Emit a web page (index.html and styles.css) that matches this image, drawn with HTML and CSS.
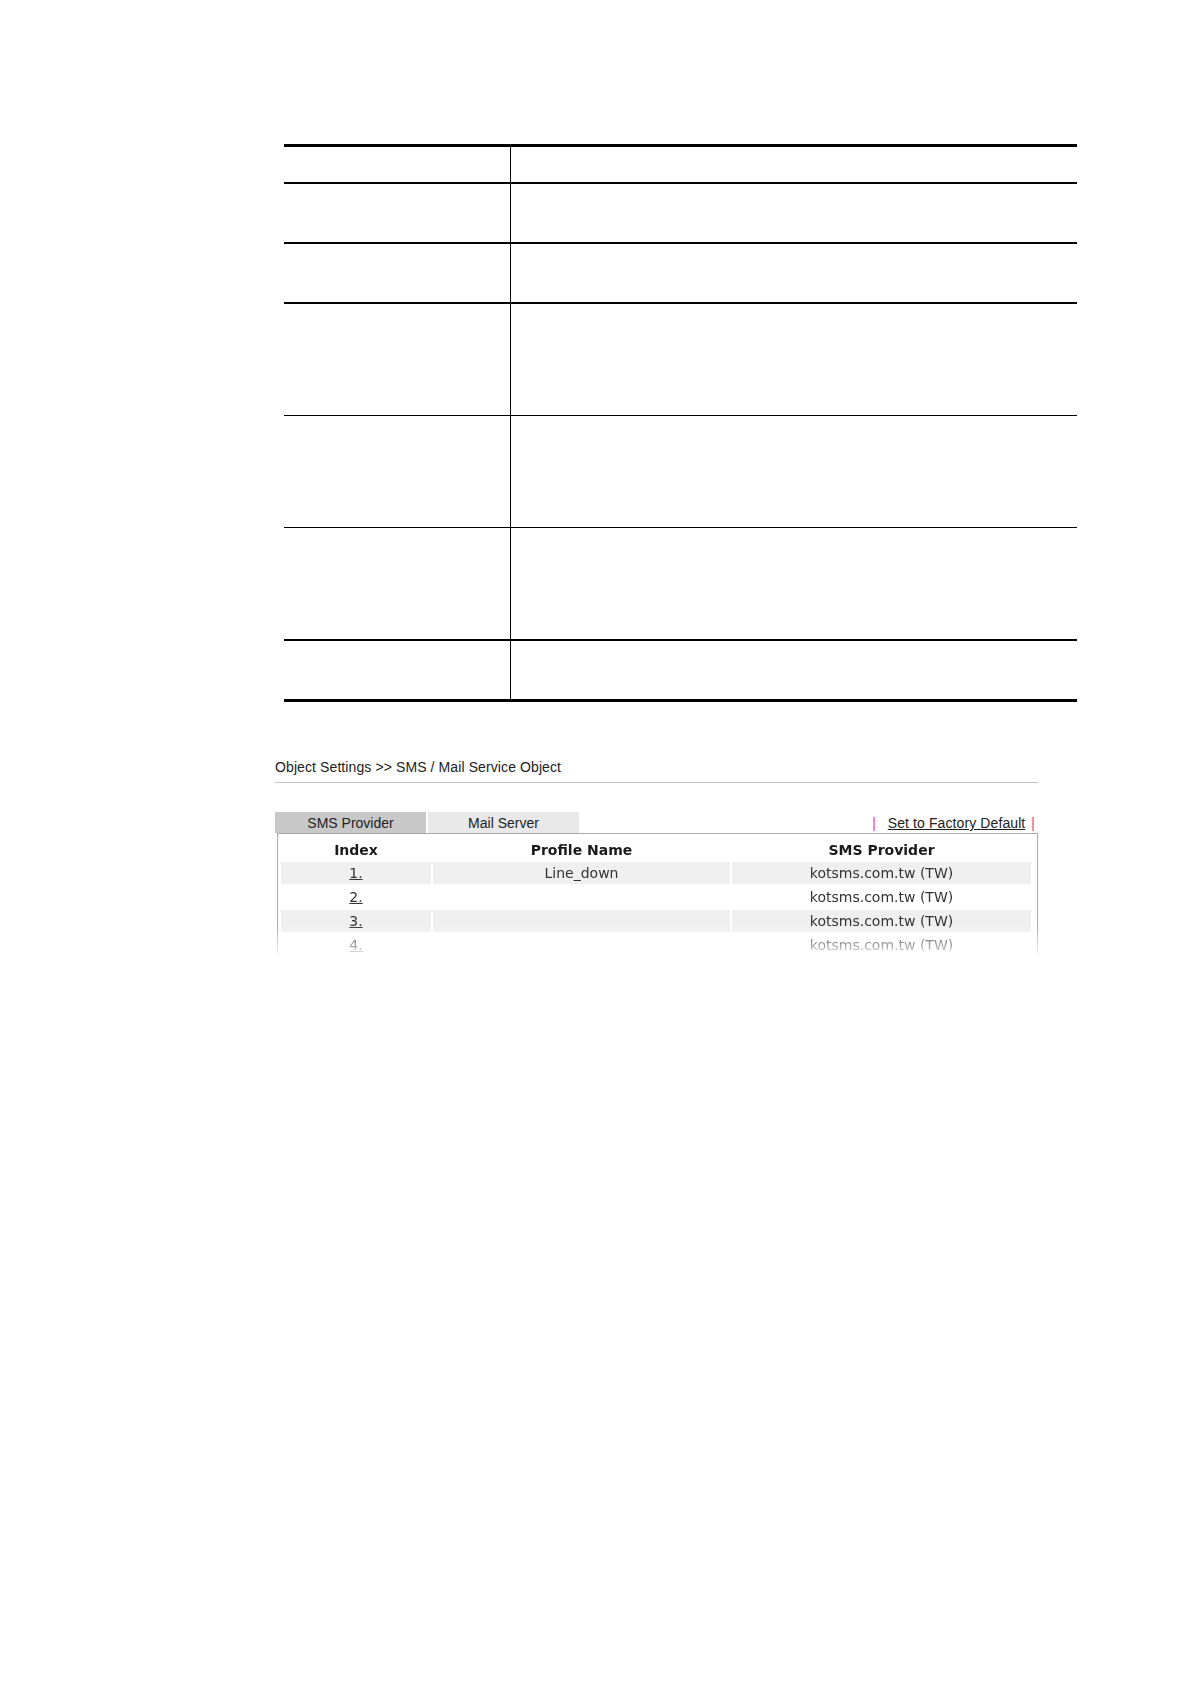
FILE: index.html
```html
<!DOCTYPE html>
<html>
<head>
<meta charset="utf-8">
<title>SMS / Mail Service Object</title>
<link rel="stylesheet" href="styles.css">
</head>
<body>
<div class="page">
  <div class="spec">
    <div class="row r1"><div class="k"></div><div class="v"></div></div>
    <div class="row r2"><div class="k"></div><div class="v"></div></div>
    <div class="row r3"><div class="k"></div><div class="v"></div></div>
    <div class="row r4"><div class="k"></div><div class="v"></div></div>
    <div class="row r5"><div class="k"></div><div class="v"></div></div>
    <div class="row r6"><div class="k"></div><div class="v"></div></div>
    <div class="row r7"><div class="k"></div><div class="v"></div></div>
  </div>

  <div class="shot">
    <div class="crumb">Object Settings &gt;&gt; SMS / Mail Service Object</div>
    <div class="tabbar">
      <div class="tab active">SMS Provider</div>
      <div class="tab">Mail Server</div>
      <div class="actions"><span class="bar bar-l">|</span><a class="link" href="#">Set to Factory Default</a><span class="bar bar-r">|</span></div>
    </div>
    <div class="panel">
      <table class="grid">
        <colgroup><col class="c1"><col class="c2"><col class="c3"></colgroup>
        <thead>
          <tr><th>Index</th><th>Profile Name</th><th>SMS Provider</th></tr>
        </thead>
        <tbody>
          <tr class="odd"><td><a class="idx" href="#">1.</a></td><td>Line_down</td><td>kotsms.com.tw (TW)</td></tr>
          <tr><td><a class="idx" href="#">2.</a></td><td></td><td>kotsms.com.tw (TW)</td></tr>
          <tr class="odd"><td><a class="idx" href="#">3.</a></td><td></td><td>kotsms.com.tw (TW)</td></tr>
          <tr><td><a class="idx" href="#">4.</a></td><td></td><td>kotsms.com.tw (TW)</td></tr>
        </tbody>
      </table>
    </div>
  </div>
</div>
</body>
</html>
```

FILE: styles.css
```css
html, body {
  margin: 0;
  padding: 0;
  background: #ffffff;
}

.page {
  padding-top: 144px;
  min-height: 1540px;
}

/* ---------- specification table (empty lines) ---------- */
.spec {
  margin-left: 284px;
  width: 793px;
  border-top: 3px solid #000;
  border-bottom: 3px solid #000;
}

.row {
  display: grid;
  grid-template-columns: 227px 1fr;
  border-bottom: 2px solid #000;
}

.row .k {
  border-right: 1px solid #000;
}

.r1 { height: 35px; }
.r2 { height: 58px; }
.r3 { height: 58px; }
.r4 { height: 111px; border-bottom-width: 1px; }
.r5 { height: 111px; border-bottom-width: 1px; }
.r6 { height: 111px; }
.r7 { height: 58px; border-bottom: none; }

/* ---------- screenshot of router UI ---------- */
.shot {
  margin-left: 275px;
  width: 763px;
  margin-top: 57px;
  font-family: "Liberation Sans", Arial, sans-serif;
  color: #333;
}

.crumb {
  font-size: 14px;
  line-height: 16px;
  padding-bottom: 7px;
  border-bottom: 1px solid #c4c4c4;
  color: #222;
  letter-spacing: 0.1px;
}

.tabbar {
  display: flex;
  align-items: flex-start;
  margin-top: 29px;
  height: 21px;
}

.tab {
  width: 151px;
  height: 19px;
  padding-top: 2px;
  line-height: 19px;
  font-size: 14px;
  text-align: center;
  background: #e8e8e8;
  color: #222;
  margin-right: 2px;
}

.tab.active {
  background: #c8c8c8;
}

.actions {
  margin-left: auto;
  padding-right: 3px;
  padding-top: 2px;
  line-height: 19px;
  font-size: 14px;
  display: flex;
}

.bar {
  color: #e5468c;
}

.bar-l { margin-right: 12px; }
.bar-r { margin-left: 6px; }

.link {
  color: #222;
  text-decoration: underline;
  letter-spacing: 0.1px;
}

.panel {
  margin-left: 2px;
  width: 759px;
  border: 1px solid #a8a8a8;
  border-bottom: none;
  padding-top: 4px;
  height: 122px;
  overflow: hidden;
  -webkit-mask-image: linear-gradient(to bottom, #000 0, #000 92px, rgba(0,0,0,0.4) 114px, transparent 124px);
  mask-image: linear-gradient(to bottom, #000 0, #000 92px, rgba(0,0,0,0.4) 114px, transparent 124px);
}

.grid {
  margin-left: 1px;
  border-collapse: separate;
  border-spacing: 2px 2px;
  font-family: "DejaVu Sans", Verdana, sans-serif;
  font-size: 14px;
  color: #333;
  table-layout: fixed;
  width: 754px;
}

.c1 { width: 150px; }
.c2 { width: 297px; }
.c3 { width: 299px; }

.grid th {
  height: 20px;
  line-height: 20px;
  padding: 0;
  font-weight: bold;
  color: #1a1a1a;
  text-align: center;
}

.grid td {
  height: 22px;
  line-height: 22px;
  padding: 0;
  text-align: center;
  white-space: nowrap;
}

.grid tr.odd td {
  background: #efefef;
}

.idx {
  color: #333;
  text-decoration: underline;
}
```
